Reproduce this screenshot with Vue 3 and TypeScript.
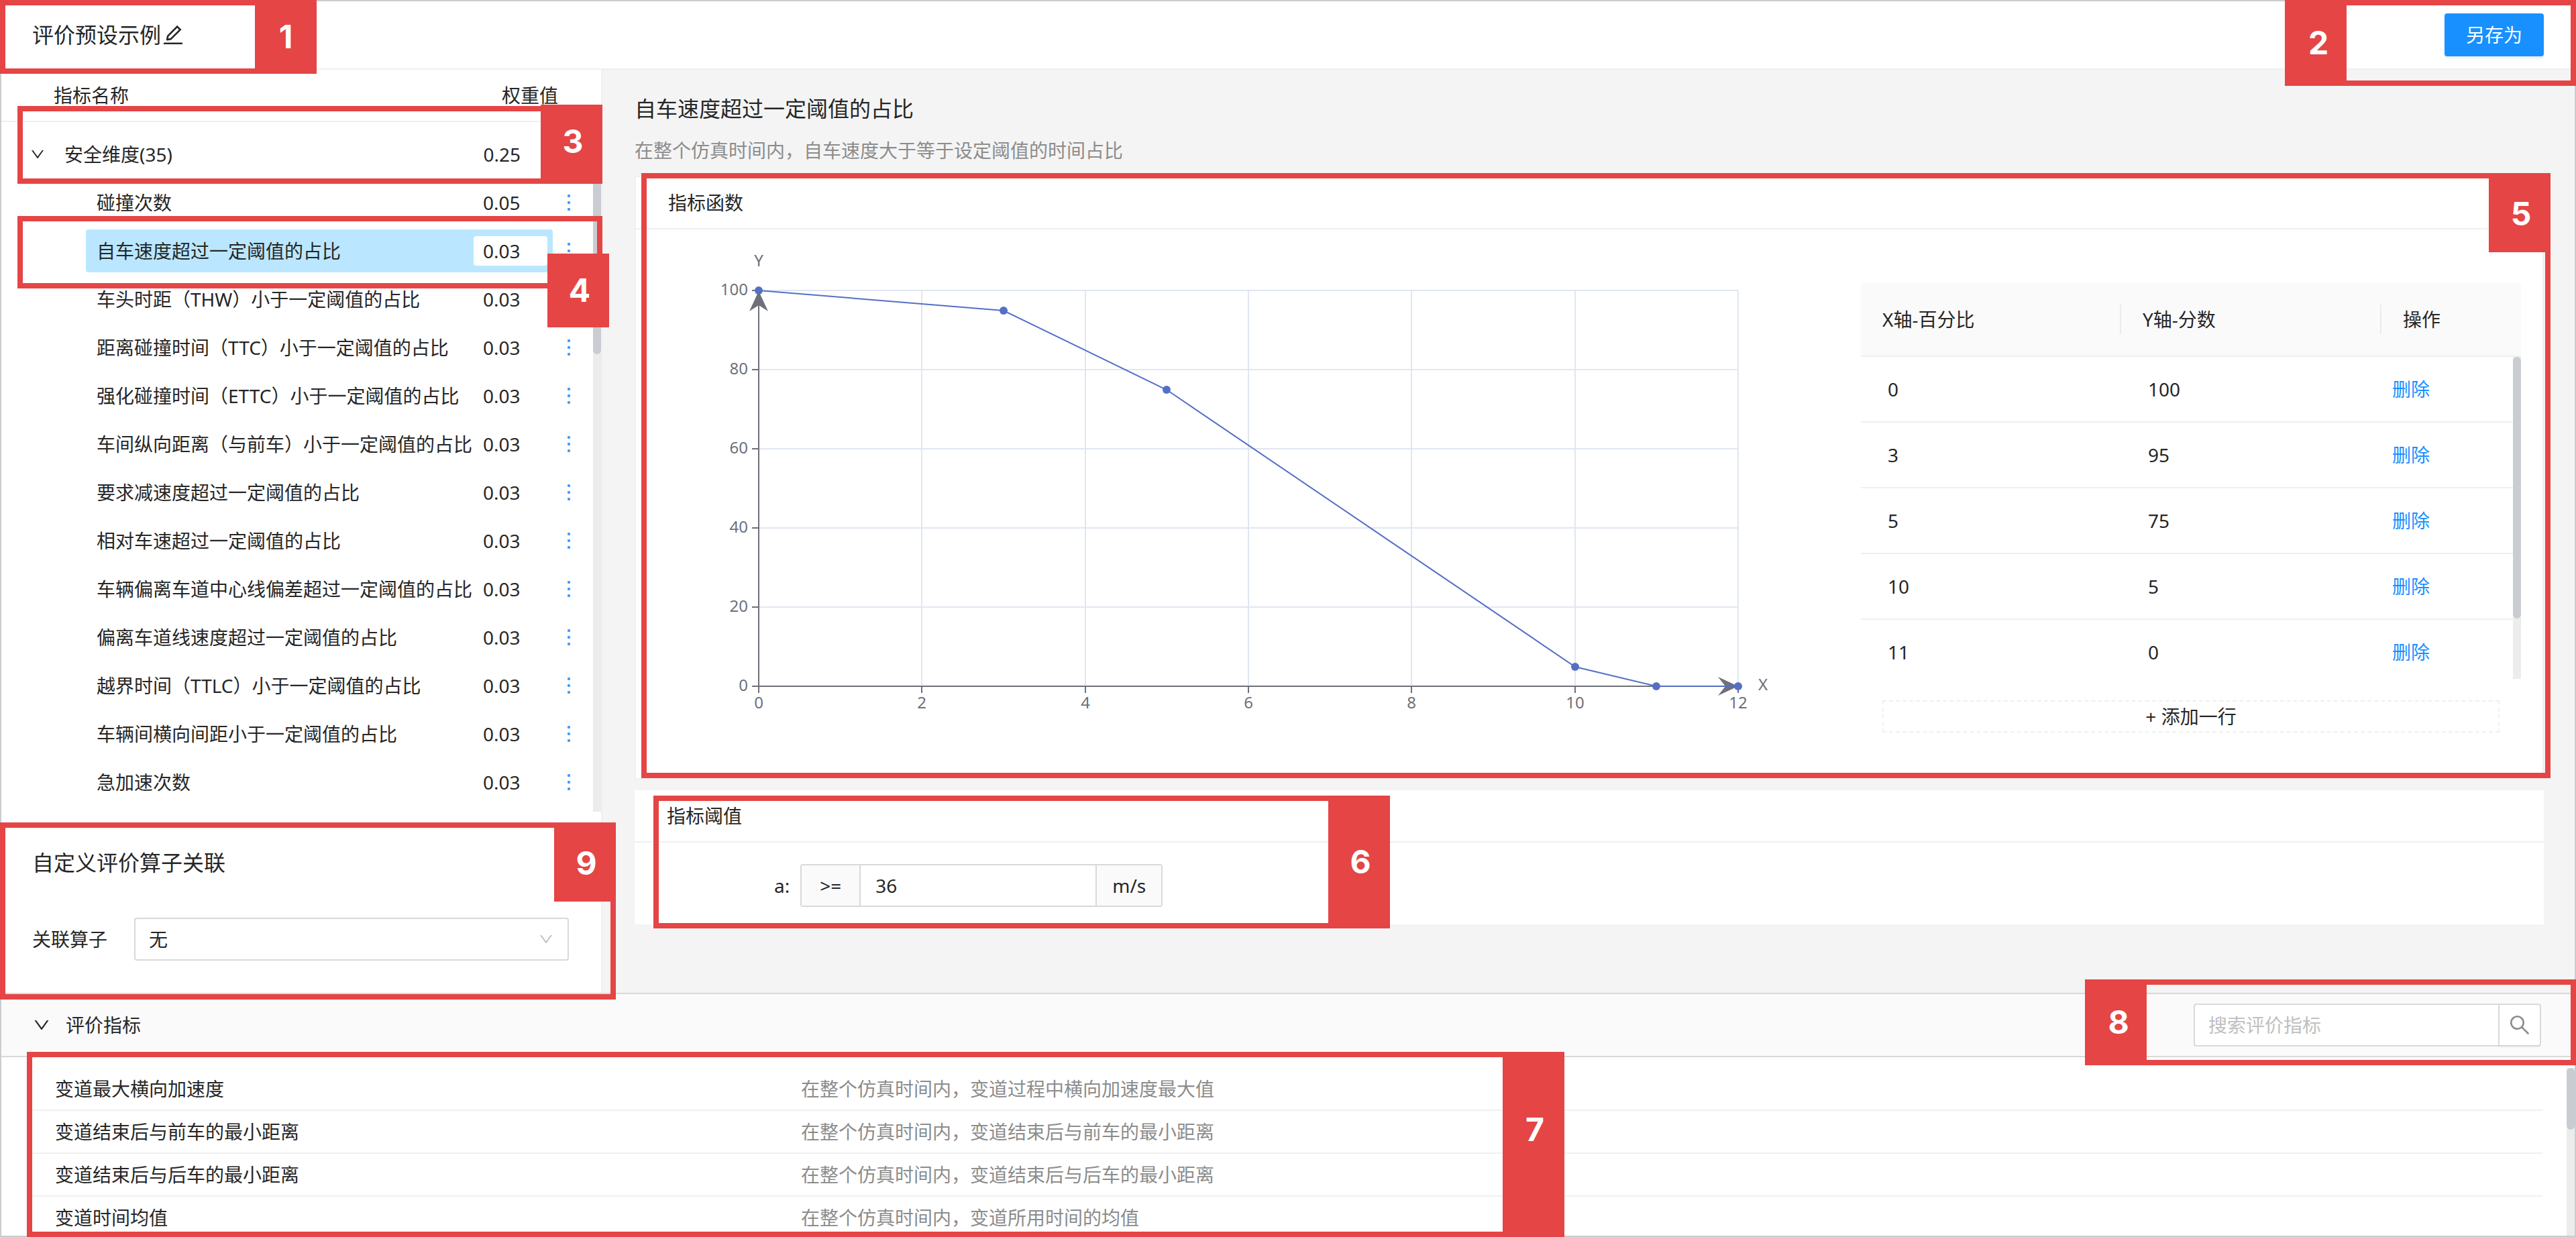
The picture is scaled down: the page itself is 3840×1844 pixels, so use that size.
<script setup lang="ts">
import { ref } from 'vue'

interface Indicator {
  name: string
  weight: string
}

interface CurvePoint {
  x: number
  y: number
}

interface Metric {
  name: string
  desc: string
}

const indicators = ref<Indicator[]>([
  { name: '碰撞次数', weight: '0.05' },
  { name: '自车速度超过一定阈值的占比', weight: '0.03' },
  { name: '车头时距（THW）小于一定阈值的占比', weight: '0.03' },
  { name: '距离碰撞时间（TTC）小于一定阈值的占比', weight: '0.03' },
  { name: '强化碰撞时间（ETTC）小于一定阈值的占比', weight: '0.03' },
  { name: '车间纵向距离（与前车）小于一定阈值的占比', weight: '0.03' },
  { name: '要求减速度超过一定阈值的占比', weight: '0.03' },
  { name: '相对车速超过一定阈值的占比', weight: '0.03' },
  { name: '车辆偏离车道中心线偏差超过一定阈值的占比', weight: '0.03' },
  { name: '偏离车道线速度超过一定阈值的占比', weight: '0.03' },
  { name: '越界时间（TTLC）小于一定阈值的占比', weight: '0.03' },
  { name: '车辆间横向间距小于一定阈值的占比', weight: '0.03' },
  { name: '急加速次数', weight: '0.03' },
])
const selected = ref(1)

const points: CurvePoint[] = [
  { x: 0, y: 100 },
  { x: 3, y: 95 },
  { x: 5, y: 75 },
  { x: 10, y: 5 },
  { x: 11, y: 0 },
  { x: 12, y: 0 },
]
const tableRows = points.slice(0, 5)

const metrics: Metric[] = [
  { name: '变道最大横向加速度', desc: '在整个仿真时间内，变道过程中横向加速度最大值' },
  { name: '变道结束后与前车的最小距离', desc: '在整个仿真时间内，变道结束后与前车的最小距离' },
  { name: '变道结束后与后车的最小距离', desc: '在整个仿真时间内，变道结束后与后车的最小距离' },
  { name: '变道时间均值', desc: '在整个仿真时间内，变道所用时间的均值' },
]

const threshold = ref('36')
const operator = ref('无')
const keyword = ref('')

// Plot area inside the chart's view box
const plot = { left: 183, right: 1643, top: 91, bottom: 681 }
const xTicks = [0, 2, 4, 6, 8, 10, 12]
const yTicks = [0, 20, 40, 60, 80, 100]
const px = (v: number) => Math.round(plot.left + (v / 12) * (plot.right - plot.left))
const py = (v: number) => Math.round(plot.bottom - (v / 100) * (plot.bottom - plot.top))
const curve = points.map((p) => `${px(p.x)},${py(p.y)}`).join(' ')

const downPath =
  'M884 256h-75c-5.1 0-9.9 2.5-12.9 6.6L512 654.2 227.9 262.6c-3-4.1-7.8-6.6-12.9-6.6h-75c-6.5 0-10.3 7.4-6.5 12.7l352.6 486.1c12.8 17.6 39 17.6 51.7 0l352.6-486.1c3.9-5.3.1-12.7-6.4-12.7z'
</script>

<template>
  <div class="page">
    <header class="topbar">
      <h1 class="preset-name">
        评价预设示例<button class="icon-btn" aria-label="编辑">
          <svg class="icon-edit" viewBox="0 0 1024 1024"><path d="M257.7 752c2 0 4-.2 6-.5L431.9 722c2-.4 3.9-1.3 5.3-2.8l423.9-423.9a9.96 9.96 0 000-14.1L694.9 114.9c-1.9-1.9-4.4-2.9-7.1-2.9s-5.2 1-7.1 2.9L256.8 538.8c-1.5 1.5-2.4 3.3-2.8 5.3l-29.5 168.2a33.5 33.5 0 009.4 29.8c6.6 6.4 14.9 9.9 23.8 9.9zm67.4-174.4L687.8 215l73.3 73.3-362.7 362.6-88.9 15.7 15.6-89zM880 836H144c-17.7 0-32 14.3-32 32v36c0 4.4 3.6 8 8 8h784c4.4 0 8-3.6 8-8v-36c0-17.7-14.3-32-32-32z" /></svg>
        </button>
      </h1>
      <button class="save-btn">另存为</button>
    </header>

    <div class="body">
      <aside class="sidebar">
        <div class="tree-head">
          <span>指标名称</span>
          <span class="head-weight">权重值</span>
        </div>
        <div class="tree">
          <div class="tree-list">
            <div class="group-row">
              <button class="icon-btn" aria-label="收起">
                <svg class="icon-down" viewBox="0 0 1024 1024"><path :d="downPath" /></svg>
              </button>
              <span class="group-name">安全维度(35)</span>
              <span class="group-weight">0.25</span>
            </div>
            <div v-for="(item, i) in indicators" :key="item.name" class="leaf-row">
              <div class="leaf" :class="{ active: i === selected }" @click="selected = i">
                <span class="leaf-name">{{ item.name }}</span>
                <input v-model="item.weight" class="leaf-weight" :aria-label="item.name" />
              </div>
              <button class="more" aria-label="更多"><i></i><i></i><i></i></button>
            </div>
          </div>
          <div class="track"><div class="thumb tree-thumb"></div></div>
        </div>
        <section class="operator">
          <h2 class="title">自定义评价算子关联</h2>
          <div class="operator-row">
            <label for="operator">关联算子</label>
            <div class="select-box">
              <select id="operator" v-model="operator">
                <option>无</option>
              </select>
              <svg class="icon-down select-arrow" viewBox="0 0 1024 1024"><path :d="downPath" /></svg>
            </div>
          </div>
        </section>
      </aside>

      <main class="main">
        <h2 class="title">自车速度超过一定阈值的占比</h2>
        <p class="subtitle">在整个仿真时间内，自车速度大于等于设定阈值的时间占比</p>

        <section class="card card-outlined">
          <h3 class="card-title">指标函数</h3>
          <div class="func-body">
            <svg class="chart" viewBox="0 0 1826 818" role="img" aria-label="指标函数曲线">
              <g class="grid-lines">
                <line v-for="t in yTicks.slice(1)" :key="'h' + t" :x1="plot.left" :x2="plot.right" :y1="py(t)" :y2="py(t)" />
                <line v-for="t in xTicks.slice(1)" :key="'v' + t" :x1="px(t)" :x2="px(t)" :y1="plot.top" :y2="plot.bottom" />
              </g>
              <g class="axis">
                <line :x1="plot.left" :x2="plot.left" :y1="plot.top" :y2="plot.bottom" />
                <line :x1="plot.left" :x2="plot.right" :y1="plot.bottom" :y2="plot.bottom" />
                <line v-for="t in yTicks" :key="'y' + t" :x1="plot.left - 10" :x2="plot.left" :y1="py(t)" :y2="py(t)" />
                <line v-for="t in xTicks" :key="'x' + t" :x1="px(t)" :x2="px(t)" :y1="plot.bottom" :y2="plot.bottom + 10" />
              </g>
              <g class="arrows">
                <path :d="`M${plot.left} ${plot.top + 1}l14 30l-14 -9l-14 9z`" />
                <path :d="`M${plot.right} ${plot.bottom}l-30 14l11 -14l-11 -14z`" />
              </g>
              <g class="labels">
                <text v-for="t in yTicks" :key="'yl' + t" class="y-label" :x="plot.left - 16" :y="py(t) + 7">{{ t }}</text>
                <text v-for="t in xTicks" :key="'xl' + t" class="x-label" :x="px(t)" :y="plot.bottom + 33">{{ t }}</text>
                <text class="x-label" :x="plot.left" :y="plot.top - 36">Y</text>
                <text :x="plot.right + 30" :y="plot.bottom + 6">X</text>
              </g>
              <polyline class="curve" :points="curve" />
              <circle v-for="p in points" :key="p.x" class="dot" :cx="px(p.x)" :cy="py(p.y)" r="6" />
            </svg>

            <div class="points">
              <div class="points-scroll">
                <table class="points-table">
                  <colgroup>
                    <col class="col-value" />
                    <col class="col-value" />
                    <col />
                  </colgroup>
                  <thead>
                    <tr>
                      <th>X轴-百分比</th>
                      <th>Y轴-分数</th>
                      <th>操作</th>
                    </tr>
                  </thead>
                  <tbody>
                    <tr v-for="row in tableRows" :key="row.x">
                      <td>{{ row.x }}</td>
                      <td>{{ row.y }}</td>
                      <td class="op"><a href="#">删除</a></td>
                    </tr>
                  </tbody>
                </table>
                <div class="track points-track"><div class="thumb points-thumb"></div></div>
              </div>
              <button class="add-row">+ 添加一行</button>
            </div>
          </div>
        </section>

        <section class="card">
          <h3 class="card-title">指标阈值</h3>
          <div class="threshold">
            <label for="threshold">a:</label>
            <div class="input-group">
              <span class="addon addon-before">&gt;=</span>
              <input id="threshold" v-model="threshold" />
              <span class="addon addon-after">m/s</span>
            </div>
          </div>
        </section>
      </main>
    </div>

    <section class="metrics">
      <div class="metrics-head">
        <button class="icon-btn" aria-label="收起">
          <svg class="icon-down icon-large" viewBox="0 0 1024 1024"><path :d="downPath" /></svg>
        </button>
        <h2 class="metrics-title">评价指标</h2>
        <div class="search">
          <input v-model="keyword" placeholder="搜索评价指标" aria-label="搜索评价指标" />
          <button class="search-btn" aria-label="搜索">
            <svg viewBox="0 0 1024 1024"><path d="M909.6 854.5L649.9 594.8C690.2 542.7 712 479 712 412c0-80.2-31.3-155.4-87.9-212.1-56.6-56.7-132-87.9-212.1-87.9s-155.5 31.3-212.1 87.9C143.2 256.5 112 331.8 112 412c0 80.1 31.3 155.5 87.9 212.1C256.5 680.8 331.8 712 412 712c67 0 130.6-21.8 182.7-62l259.7 259.6a8.2 8.2 0 0011.6 0l43.6-43.5a8.2 8.2 0 000-11.6zM570.4 570.4C528 612.7 471.8 636 412 636s-116-23.3-158.4-65.6C211.3 528 188 471.8 188 412s23.3-116.1 65.6-158.4C296 211.3 352.2 188 412 188s116.1 23.2 158.4 65.6S636 352.2 636 412s-23.3 116.1-65.6 158.4z" /></svg>
          </button>
        </div>
      </div>
      <div class="metrics-body">
        <ul class="metrics-list">
          <li v-for="m in metrics" :key="m.name">
            <span class="metric-name">{{ m.name }}</span>
            <span class="metric-desc">{{ m.desc }}</span>
          </li>
        </ul>
        <div class="track"><div class="thumb metrics-thumb"></div></div>
      </div>
    </section>

    <div class="callout c1"><b>1</b></div>
    <div class="callout c2 at-start"><b>2</b></div>
    <div class="callout c3"><b>3</b></div>
    <div class="callout c4"></div>
    <div class="callout c4-tag"><b>4</b></div>
    <div class="callout c5"><b class="short">5</b></div>
    <div class="callout c6"><b>6</b></div>
    <div class="callout c7"><b>7</b></div>
    <div class="callout c8 at-start"><b>8</b></div>
    <div class="callout c9"><b class="short">9</b></div>
  </div>
</template>

<style>
body {
  margin: 0;
}
</style>

<style scoped>
.page,
.page * {
  box-sizing: border-box;
}

.page {
  position: relative;
  display: flex;
  flex-direction: column;
  height: 100vh;
  border: 2px solid #c9cdd1;
  background: #fff;
  color: #262626;
  font-family: 'Noto Sans', 'Noto Sans CJK SC', sans-serif;
  font-size: 28px;
  line-height: 44px;
}

h1,
h2,
h3,
p,
ul {
  margin: 0;
  padding: 0;
  font-weight: 400;
}

button,
input,
select {
  margin: 0;
  padding: 0;
  border: 0;
  outline: 0;
  background: transparent;
  color: inherit;
  font: inherit;
}

svg {
  display: block;
  fill: currentColor;
}

/* Top bar */
.topbar {
  flex: none;
  display: flex;
  align-items: center;
  justify-content: space-between;
  height: 102px;
  padding: 0 46px;
  border-bottom: 2px solid #f0f0f0;
}

.preset-name {
  display: flex;
  align-items: center;
  font-size: 32px;
  line-height: 48px;
}

.icon-edit {
  width: 36px;
  height: 36px;
}

.save-btn {
  width: 148px;
  height: 64px;
  border-radius: 4px;
  background: #1890ff;
  box-shadow: 0 4px 0 rgba(0, 0, 0, 0.045);
  color: #fff;
}

/* Body */
.body {
  flex: none;
  display: flex;
  background: #f4f4f4;
}

.sidebar {
  flex: none;
  width: 896px;
  border-right: 2px solid #f0f0f0;
  background: #fff;
}

.tree-head {
  display: flex;
  align-items: center;
  height: 78px;
  padding: 0 64px 0 78px;
  border-bottom: 2px solid #f0f0f0;
}

.head-weight {
  margin-left: auto;
}

.tree {
  display: flex;
}

.tree-list {
  flex: 1;
  padding: 12px 0 8px;
}

.group-row {
  display: flex;
  align-items: center;
  height: 72px;
  padding: 0 108px 0 42px;
}

.icon-down {
  width: 24px;
  height: 24px;
}

.icon-large {
  width: 28px;
  height: 28px;
}

.group-name {
  margin-left: 28px;
}

.group-weight {
  margin-left: auto;
}

.leaf-row {
  display: flex;
  align-items: center;
  height: 72px;
  padding-left: 126px;
}

.leaf {
  display: flex;
  align-items: center;
  width: 696px;
  height: 64px;
  padding: 0 8px 0 16px;
  border-radius: 4px;
}

.leaf.active {
  background: #bae7ff;
}

.leaf-name {
  white-space: nowrap;
}

.leaf-weight {
  width: 110px;
  height: 44px;
  margin-left: auto;
  padding-left: 14px;
  border-radius: 4px;
  background: #fff;
}

.more {
  display: flex;
  flex-direction: column;
  gap: 6px;
  margin-left: 22px;
}

.more i {
  width: 4px;
  height: 4px;
  border-radius: 1px;
  background: #40a0ff;
}

.track {
  flex: none;
  width: 12px;
  background: #ececec;
}

.thumb {
  border-radius: 6px;
  background: #c9cdd1;
}

.tree-thumb {
  height: 346px;
}

.operator {
  padding: 52px 46px 48px;
}

.title {
  font-size: 32px;
  line-height: 48px;
}

.operator-row {
  display: flex;
  align-items: center;
  gap: 40px;
  margin-top: 58px;
}

.select-box {
  position: relative;
  width: 648px;
}

.select-box select {
  width: 100%;
  height: 64px;
  padding: 0 20px;
  border: 2px solid #d9d9d9;
  border-radius: 4px;
  background: #fff;
  appearance: none;
}

.select-arrow {
  position: absolute;
  top: 20px;
  right: 22px;
  color: #bfbfbf;
  pointer-events: none;
}

/* Main */
.main {
  flex: 1;
  min-width: 0;
  padding: 34px 46px 102px 48px;
}

.subtitle {
  margin-top: 16px;
  color: #8c8c8c;
}

.card {
  margin-top: 16px;
  background: #fff;
}

.card-outlined {
  border: 2px solid #f0f0f0;
}

.card-title {
  height: 78px;
  padding: 0 48px;
  border-bottom: 2px solid #f0f0f0;
  font-size: 28px;
  line-height: 76px;
}

.func-body {
  display: grid;
  grid-template-columns: 1826fr 984fr;
  padding-right: 32px;
}

.chart {
  width: 100%;
}

.grid-lines line {
  stroke: #e0e6f1;
  stroke-width: 2;
}

.axis line {
  stroke: #6e7079;
  stroke-width: 2;
}

.arrows path {
  fill: #6e7079;
}

.labels text {
  fill: #6e7079;
  font-size: 24px;
}

.labels .y-label {
  text-anchor: end;
}

.labels .x-label {
  text-anchor: middle;
}

.curve {
  fill: none;
  stroke: #5470c6;
  stroke-width: 2;
}

.dot {
  fill: #5470c6;
}

.points {
  padding-top: 80px;
}

.points-scroll {
  position: relative;
}

.points-table {
  width: 100%;
  border-collapse: separate;
  border-spacing: 0;
  table-layout: fixed;
}

.col-value {
  width: 388px;
}

.points-table th {
  position: relative;
  height: 110px;
  padding: 0 32px;
  border-bottom: 2px solid #f0f0f0;
  background: #fafafa;
  font-weight: 400;
  text-align: left;
}

.points-table th:not(:last-child)::after {
  position: absolute;
  top: 32px;
  right: 0;
  width: 2px;
  height: 44px;
  background: #ebebeb;
  content: '';
}

.points-table td {
  height: 98px;
  padding: 0 40px;
  border-bottom: 2px solid #f0f0f0;
}

.points-table tr:last-child td {
  border-bottom-color: transparent;
}

.points-table td.op {
  padding-left: 16px;
}

.op a {
  color: #1890ff;
  text-decoration: none;
}

.points-track {
  position: absolute;
  top: 110px;
  right: 0;
  bottom: 10px;
}

.points-thumb {
  height: 390px;
}

.add-row {
  display: block;
  width: calc(100% - 64px);
  height: 48px;
  margin: 22px 32px 0;
  border: 2px dashed #f0f0f0;
  line-height: 44px;
}

.threshold {
  display: flex;
  align-items: center;
  gap: 16px;
  padding: 32px 208px 26px;
}

.input-group {
  display: flex;
  width: 540px;
  height: 64px;
  border: 2px solid #d9d9d9;
  border-radius: 4px;
}

.addon {
  background: #fafafa;
  line-height: 60px;
  text-align: center;
}

.addon-before {
  width: 88px;
  border-right: 2px solid #d9d9d9;
}

.addon-after {
  width: 98px;
  border-left: 2px solid #d9d9d9;
}

.input-group input {
  flex: 1;
  min-width: 0;
  padding: 0 22px;
}

/* Metrics */
.metrics {
  flex: 1;
  display: flex;
  flex-direction: column;
  min-height: 0;
}

.metrics-head {
  flex: none;
  display: flex;
  align-items: center;
  height: 96px;
  padding: 0 50px 0 46px;
  border-top: 2px solid #d9d9d9;
  border-bottom: 2px solid #d9d9d9;
  background: #fafafa;
}

.metrics-title {
  margin-left: 22px;
  font-size: 28px;
}

.search {
  display: flex;
  width: 518px;
  height: 64px;
  margin-left: auto;
  border: 2px solid #d9d9d9;
  border-radius: 4px;
  background: #fff;
}

.search input {
  flex: 1;
  min-width: 0;
  padding: 0 20px;
}

.search input::placeholder {
  color: #bfbfbf;
  opacity: 1;
}

.search-btn {
  display: flex;
  align-items: center;
  justify-content: center;
  width: 62px;
  border-left: 2px solid #d9d9d9;
  box-shadow: 0 4px 0 rgba(0, 0, 0, 0.02);
  color: #8c8c8c;
}

.search-btn svg {
  width: 36px;
  height: 36px;
}

.metrics-body {
  flex: 1;
  display: flex;
  min-height: 0;
  padding-top: 16px;
  overflow: hidden;
}

.metrics-list {
  flex: 1;
  padding: 0 36px 0 46px;
  list-style: none;
}

.metrics-list li {
  display: flex;
  align-items: center;
  height: 64px;
  padding-left: 34px;
  border-bottom: 2px solid #f0f0f0;
}

.metric-name {
  flex: none;
  width: 1112px;
}

.metric-desc {
  color: #8c8c8c;
}

.metrics-thumb {
  height: 92px;
}

/* Numbered callouts laid over the page */
.callout {
  position: absolute;
  display: flex;
  justify-content: flex-end;
  align-items: stretch;
  border: 8px solid #e54545;
  pointer-events: none;
}

.callout b {
  display: flex;
  flex: none;
  align-items: center;
  justify-content: center;
  width: 92px;
  margin-right: -8px;
  padding-left: 4px;
  background: #e54545;
  color: #fff;
  font-family: Inter, sans-serif;
  font-size: 48px;
  font-weight: 700;
}

.callout.at-start {
  justify-content: flex-start;
}

.callout.at-start b {
  width: 84px;
  margin-right: 0;
  padding-left: 0;
}

.callout b.short {
  height: 110px;
  padding-bottom: 4px;
}

.c1 {
  top: -2px;
  left: -2px;
  width: 472px;
  height: 110px;
}

.c1 b {
  padding-left: 0;
}

.c2 {
  top: -2px;
  right: -2px;
  width: 434px;
  height: 128px;
}

.c3 {
  top: 156px;
  left: 24px;
  width: 872px;
  height: 116px;
}

.c3 b {
  margin-top: -10px;
}

.c4 {
  top: 320px;
  left: 24px;
  width: 872px;
  height: 108px;
}

.c4-tag {
  top: 376px;
  left: 814px;
  width: 92px;
  height: 110px;
}

.c5 {
  top: 256px;
  left: 954px;
  right: 36px;
  height: 902px;
}

.c6 {
  top: 1184px;
  left: 972px;
  width: 1098px;
  height: 198px;
}

.c7 {
  top: 1566px;
  left: 38px;
  bottom: -2px;
  width: 2292px;
}

.c7 b {
  padding-bottom: 44px;
}

.c8 {
  top: 1458px;
  right: -2px;
  width: 732px;
  height: 128px;
}

.c9 {
  top: 1224px;
  left: -2px;
  width: 918px;
  height: 264px;
}
</style>
